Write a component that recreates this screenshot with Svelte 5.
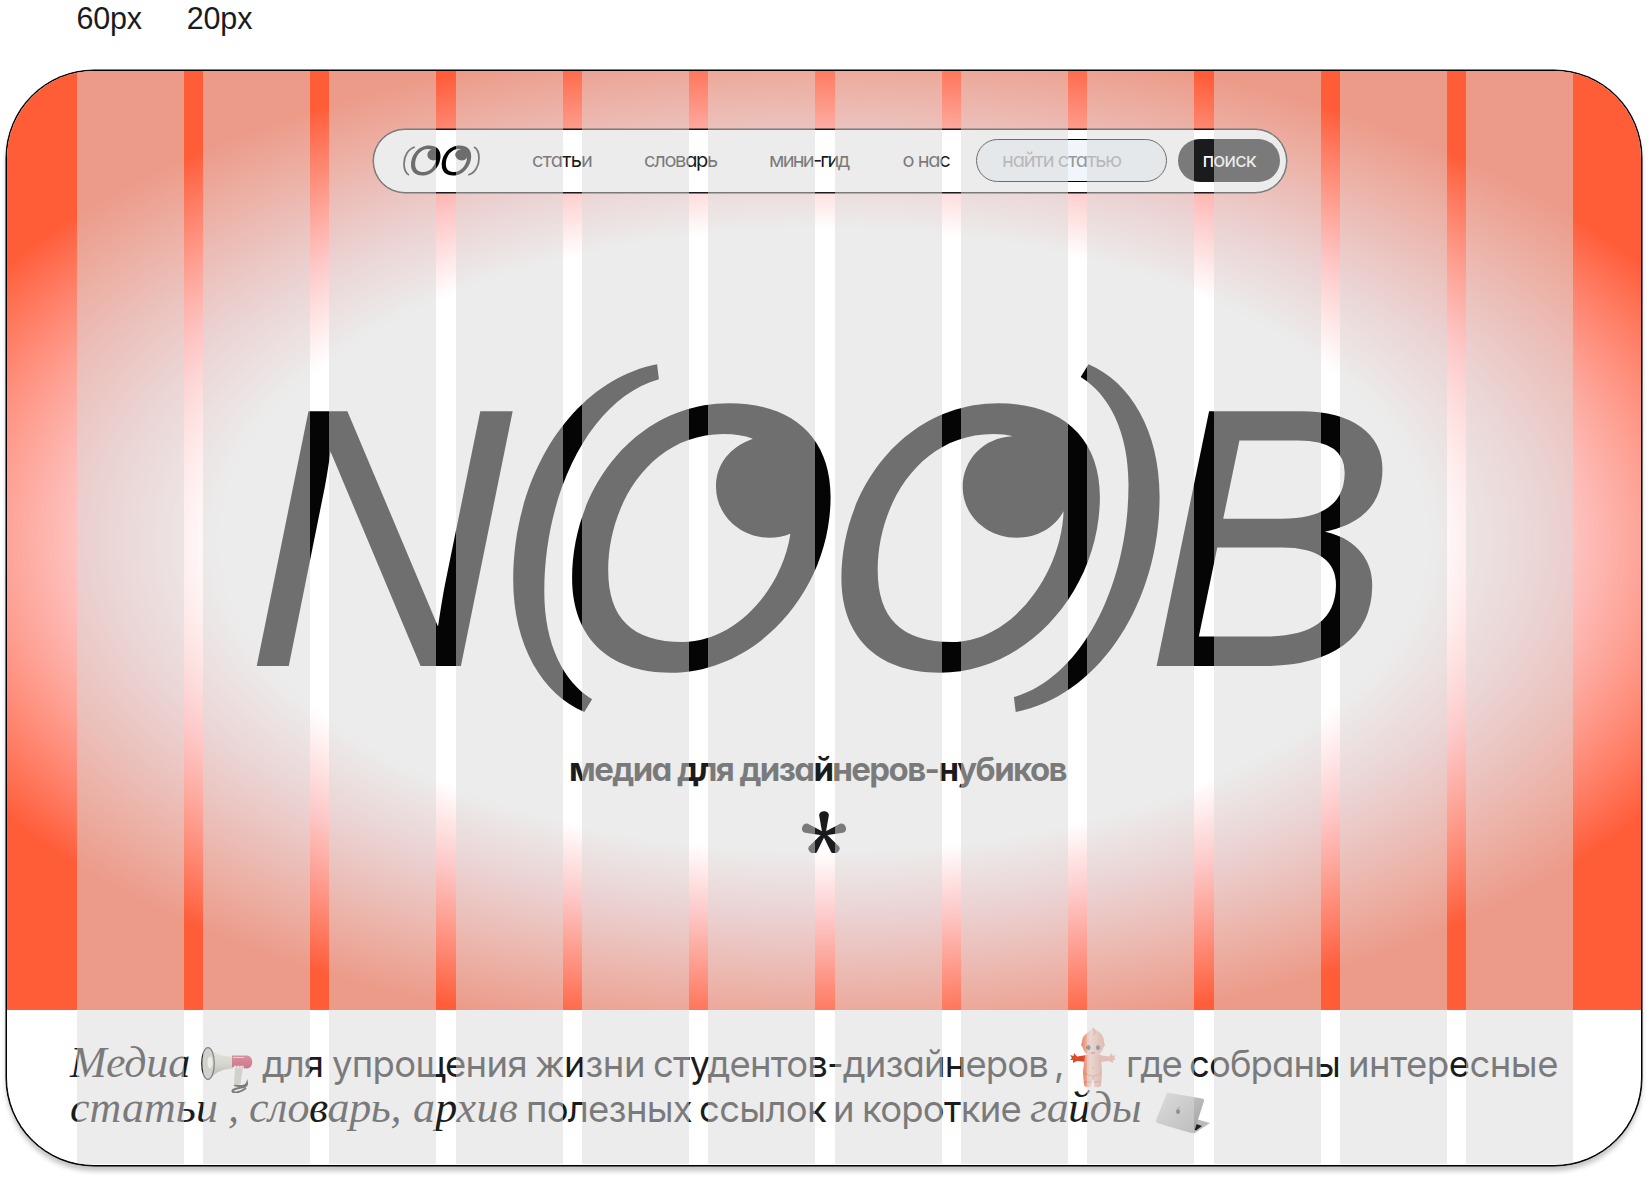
<script>
  const columns = Array.from({ length: 12 });
  const links = [
    { text: 'статьи', gap: 52, width: 60 },
    { text: 'словарь', gap: 52, width: 73 },
    { text: 'мини-гид', gap: 52, width: 79.5 },
    { text: 'о нас', gap: 54, width: 47 },
  ];
  const lines = [
    [
      { text: 'Медиа', serif: true, gap: 0, width: 120 },
      { art: 'megaphone', gap: 11 },
      { text: 'для', gap: 9, width: 61 },
      { text: 'упрощения', gap: 9, width: 195 },
      { text: 'жизни', gap: 8, width: 110 },
      { text: 'студентов-дизайнеров', gap: 8, width: 395 },
      { text: ',', gap: 6, width: 9 },
      { art: 'doll', gap: 7 },
      { text: 'где', gap: 10, width: 55 },
      { text: 'собраны', gap: 8, width: 151 },
      { text: 'интересные', gap: 8, width: 210 },
    ],
    [
      { text: 'статьи', serif: true, gap: 0, width: 148 },
      { text: ',', serif: true, gap: 10, width: 9 },
      { text: 'словарь,', serif: true, gap: 12, width: 152 },
      { text: 'архив', serif: true, gap: 12, width: 105 },
      { text: 'полезных', gap: 8, width: 166 },
      { text: 'ссылок', gap: 7, width: 127 },
      { text: 'и', gap: 7, width: 22 },
      { text: 'короткие', gap: 7, width: 159 },
      { text: 'гайды', serif: true, gap: 9, width: 111 },
      { art: 'laptop', gap: 15 },
    ],
  ];

  // Tracks the word out (or in) until its box has the given width.
  function track(node, width) {
    const natural = node.getBoundingClientRect().width;
    node.style.letterSpacing = `${(width - natural) / node.textContent.length}px`;
  }
</script>

{#snippet eye(second)}
  <path
    fill-rule="evenodd"
    d={'M572.1 578.3C572.1 488 636 403.3 729.3 403.3C793 403.3 830.6 438 830.6 496.7C830.6 590 758 672.7 670.4 672.7C606 672.7 572.1 635 572.1 578.3Z' +
      (second
        ? 'M608.4 570C608.4 505 650 434 723.9 434C731 434 738 434.8 743.4 436.3C714 437.5 693.4 460 693.4 487.3C693.4 515 717 537.7 747.3 537.7C768 537.7 785 528 794.3 511.3C792 575 742 642 682.9 642C632 642 608.4 618 608.4 570Z'
        : 'M608.2 570C608.2 505 650 434 723.9 434C735 434 744 435.5 752.9 438.7C730 447 716 464 716 486.7C716 515 740 537.7 769.3 537.7C777 537.7 784 536.4 790.4 533.7C782 590 735 642 682.9 642C632 642 608.2 618 608.2 570Z')}
  />
{/snippet}

<div class="page">
  <div class="measures"><span>60px</span><span>20px</span></div>

  <main class="card">
    <section class="hero">
      <nav class="bar">
        <svg class="mark" viewBox="0 0 77 32" aria-label="OO">
          <g transform="translate(-57.2 -44.5) scale(.114 .1115)">{@render eye(false)}</g>
          <g transform="translate(-26.5 -44.5) scale(.114 .1115)">{@render eye(true)}</g>
          <path class="lid" d="M11.8 2C5 4 1 11 1 18.8C1 24 3 28.500 6 30" />
          <path class="lid" d="M65.2 30C72 28 76 21 76 13.200C76 8 74 3.500 71 2" />
        </svg>
        {#each links as link}
          <a href="#top" style:margin-left="{link.gap}px" use:track={link.width}>{link.text}</a>
        {/each}
        <div class="field"><span use:track={119}>найти статью</span></div>
        <button><span use:track={53}>поиск</span></button>
      </nav>

      <svg class="wordmark" viewBox="250 360 1140 356">
        <text transform="translate(246.8 665) skewX(-.7) scale(.985 1)">N</text>
        <text transform="translate(1146.5 665) skewX(-.7)">B</text>
        {@render eye(false)}
        <g transform="translate(269.3 0)">{@render eye(true)}</g>
        {#each [0, 180] as turn}
          <path
            transform="rotate({turn} 836.4 538.15)"
            d="M657.1 364.3C575 380 513.2 472 513.2 580C513.2 645 542 694 584.3 712L592.1 699.3C564 682 544.3 645 544.3 591.7C544.3 490 592 398 658.9 379.3Z"
          />
        {/each}
      </svg>

      <p class="tagline"><span use:track={497}>медиа для дизайнеров-нубиков</span></p>
      <svg class="star" viewBox="-22 -24 44 43">
        {#each [0, 72, 144, 216, 288] as turn}
          <path transform="rotate({turn})" d="M-1.600 0L-4.800-18.500C-5.300-24.300 5.300-24.300 4.800-18.500L1.600 0Z" />
        {/each}
      </svg>
    </section>

    <section class="about">
      {#each lines as line}
        <div class="line">
          {#each line as item}
            {#if item.art === 'megaphone'}
              <svg class="megaphone" style:margin-left="{item.gap}px" viewBox="0 0 52 46">
                <defs>
                  <linearGradient id="horn" x2="0" y2="1"><stop stop-color="#f0efe4" /><stop offset=".5" stop-color="#d3d5c8" /><stop offset="1" stop-color="#8d9384" /></linearGradient>
                  <linearGradient id="grip" x2="0" y2="1"><stop stop-color="#c9546c" /><stop offset=".5" stop-color="#d62a4e" /><stop offset="1" stop-color="#a81f40" /></linearGradient>
                </defs>
                <path d="M33 38C39 40 45 39 46 36C47 41 38 40 32 43C29 46 38 47 45 41" fill="none" stroke="#1c1e1d" stroke-width="2" />
                <path d="M34 20L42 20L39.500 37L33 38Z" fill="#c6cabb" />
                <path d="M8 1C15 8 23 9.500 32 9.500V21.500C23 21.500 15 25 8 32Z" fill="url(#horn)" />
                <path d="M31 8.500H46C53 9 53 21 46 21.500L31 20Z" fill="url(#grip)" />
                <path d="M32 10.500H43" stroke="#f3c8cf" />
                <path d="M33 20H43" stroke="#f0efe8" stroke-width="2.500" stroke-dasharray="2.500 .6" />
                <ellipse cx="7" cy="16.500" rx="6.300" ry="15.800" fill="#c8cabd" stroke="#282a28" stroke-width="1.200" />
                <ellipse cx="9" cy="15.500" rx="2.500" ry="6" fill="#fffef5" />
              </svg>
            {:else if item.art === 'doll'}
              <svg class="doll" style:margin-left="{item.gap}px" viewBox="0 0 46 60">
                <defs>
                  <linearGradient id="skin"><stop stop-color="#e08468" /><stop offset=".4" stop-color="#fbd3c6" /><stop offset="1" stop-color="#df9c87" /></linearGradient>
                </defs>
                <path d="M17 27L7 28.500L4 25L3.500 28L0 27L2 30L0 32L3 32L3 35L7 33L17 34Z" fill="#dc4a2e" />
                <path d="M29 27L39 28.500L42 25L42.500 28L46 27L44 30L46 32L43 32L43 35L39 33L29 34Z" fill="#e8a48f" />
                <path d="M15 27Q23 24 31 27L32 45L31 57Q31 60 24.500 59L23 50L21 59Q15 60 14 57L13 44Z" fill="url(#skin)" />
                <path d="M15 45Q23 51 31 45M23 48V52M14 54H21M24 54H31" fill="none" stroke="#cf7d66" stroke-width=".7" />
                <path d="M23 0C25 2 34 4 34 14L35 17L33.500 19C32 25 28 28 23 28S14 25 12.500 19L11 17L12 14C12 5 21 4 23 0Z" fill="url(#skin)" />
                <path d="M23 0Q27 5 23 7" fill="none" stroke="#c97f68" />
                <ellipse cx="18.500" cy="19.500" rx="2" ry="2.600" fill="#41637b" />
                <ellipse cx="28" cy="19.500" rx="2" ry="2.600" fill="#41637b" />
                <path d="M21 25H25" stroke="#c83f3d" />
                <circle cx="23" cy="40" r=".7" fill="#c87c65" />
              </svg>
            {:else if item.art === 'laptop'}
              <svg class="laptop" style:margin-left="{item.gap}px" viewBox="0 0 54 42">
                <defs>
                  <linearGradient id="cover" x2="1" y2="1"><stop stop-color="#dedede" /><stop offset="1" stop-color="#9b9b9d" /></linearGradient>
                </defs>
                <path d="M40 27L54 31L38 41.500L33 38Z" fill="#babbbc" />
                <path d="M40.500 32L46 34L40 38.500L37 37Z" fill="#202224" />
                <path d="M11 1Q12 0 14 1L46 6.500Q48.500 7 48 9L38 40Q37 42 35 41L1 31Q0 30 0 28Z" fill="url(#cover)" />
                <ellipse cx="22" cy="19.500" rx="2" ry="2.600" fill="#444" />
                <path d="M22 16.500L23.500 15" stroke="#444" />
              </svg>
            {:else}
              <span class:serif={item.serif} style:margin-left="{item.gap}px" use:track={item.width}>{item.text}</span>
            {/if}
          {/each}
        </div>
      {/each}
    </section>

    <div class="grid">
      {#each columns as _}<i></i>{/each}
    </div>
  </main>
</div>

<style>
  :global(body) {
    background: #fff;
  }
  .page {
    box-sizing: border-box;
    width: 1649px;
    height: 1178px;
    padding: 0 7px 0 6px;
    overflow: hidden;
    font-family: Inter, 'Liberation Sans', sans-serif;
    font-feature-settings: 'cv11';
    color: #1a1b1d;
  }
  .measures {
    display: flex;
    gap: 45px;
    height: 70px;
    padding-left: 70.500px;
    font: 30.500px/37px 'Liberation Sans', sans-serif;
  }
  .measures span {
    letter-spacing: -0.2px;
  }
  .card {
    position: relative;
    box-sizing: border-box;
    display: flex;
    flex-direction: column;
    height: 1096px;
    border: 1px solid #000;
    border-radius: 88px;
    overflow: hidden;
    background: #fff;
    box-shadow: 0 0 0 0.5px #000, 0 5px 5px rgba(0, 0, 0, 0.23);
  }
  .hero {
    display: flex;
    flex-direction: column;
    align-items: center;
    flex: none;
    height: 939px;
    background: radial-gradient(979px 505px at 817px 469px, #fff 61.500%, #fdc8c8 75%, #ff5c38 100%);
  }
  .bar {
    box-sizing: border-box;
    display: flex;
    align-items: center;
    flex: none;
    width: 914px;
    height: 64px;
    margin: 57.500px 0 0 12px;
    padding: 0 6px 0 29px;
    border: 1px solid #1a1b1d;
    border-radius: 32px;
    background: #fff;
    box-shadow: 0 0 0 0.5px #1a1b1d;
    font-size: 20px;
  }
  .mark {
    flex: none;
    width: 77px;
    height: 32px;
  }
  .lid {
    fill: none;
    stroke: #1a1b1d;
    stroke-width: 1.800;
  }
  .bar a,
  .bar button,
  .field {
    color: inherit;
    text-decoration: none;
    white-space: nowrap;
    flex: none;
  }
  .bar a {
    padding-bottom: 2px;
  }
  .field {
    box-sizing: border-box;
    width: 191px;
    height: 43px;
    margin-left: auto;
    padding-left: 25px;
    border: 1px solid #000;
    border-radius: 22px;
    background: #f0f6fb;
    color: #98999b;
    line-height: 40px;
  }
  .bar button {
    width: 102px;
    height: 43px;
    margin-left: 11px;
    padding: 0 0 2px;
    border: 0;
    border-radius: 22px;
    background: #1a1b1d;
    color: #fff;
    font: inherit;
  }
  .wordmark {
    width: 1140px;
    height: 356px;
    margin: 167.500px 0 0 -9px;
    fill: #050505;
    flex: none;
    overflow: visible;
  }
  .wordmark text {
    font: italic 367.500px 'Liberation Sans', sans-serif;
    stroke: #050505;
    stroke-width: 2px;
  }
  .tagline {
    margin: 33px 0 0 -13px;
    font-size: 33px;
    font-weight: 700;
    line-height: 40px;
    white-space: nowrap;
  }
  .star {
    width: 44px;
    height: 43px;
    margin-top: 21px;
    fill: #1a1b1d;
  }
  .about {
    padding: 31px 0 0 63px;
    font-size: 36.500px;
  }
  .line {
    display: flex;
    align-items: baseline;
    height: 44.600px;
    line-height: 44px;
    white-space: nowrap;
  }
  .line > * {
    flex: none;
  }
  .serif {
    font: italic 44px/44px 'Liberation Serif', serif;
  }
  .line svg {
    align-self: flex-start;
  }
  .megaphone {
    width: 52px;
    height: 46px;
    margin-top: 5.500px;
  }
  .doll {
    width: 46px;
    height: 60px;
    margin-top: -13px;
  }
  .laptop {
    width: 54px;
    height: 42px;
    margin-top: 6px;
  }
  .grid {
    position: absolute;
    inset: 0 67.700px 1px 69.500px;
    display: flex;
    gap: 19.300px;
  }
  .grid i {
    flex: 1;
    background: rgba(217, 217, 217, 0.5);
  }
</style>
